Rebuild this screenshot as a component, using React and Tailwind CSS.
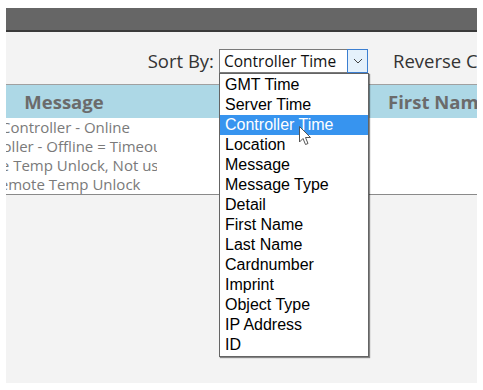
import React from "react";

const segoe = { fontFamily: '"Open Sans", "Noto Sans", sans-serif' };

const items = [
  "GMT Time",
  "Server Time",
  "Controller Time",
  "Location",
  "Message",
  "Message Type",
  "Detail",
  "First Name",
  "Last Name",
  "Cardnumber",
  "Imprint",
  "Object Type",
  "IP Address",
  "ID",
];

const rows = [
  "Controller - Online",
  "Controller - Offline = Timeout",
  "Remote Temp Unlock, Not used",
  "Remote Temp Unlock",
];

export default function App() {
  return (
    <div className="relative w-[483px] h-[390px] bg-white overflow-hidden px-[6px] pt-[8px]">
      <div className="h-[375px] w-[471px] bg-[#f3f3f3] flex flex-col overflow-hidden">
        <div className="h-[22px] bg-[#666666] shrink-0" />
        <div className="h-[2px] bg-[#3a3a3a] shrink-0" />
        <div
          className="h-[53px] shrink-0 flex items-start pt-[17px] text-[#333] whitespace-nowrap border-b border-[#a0a0a0]"
          style={segoe}
        >
          <div className="w-[208px] shrink-0 text-right text-[18.5px] leading-[24px]">Sort By:</div>
          <div className="ml-[5px] w-[149px] h-[24px] shrink-0 bg-white border border-[#7a7a7a] flex items-stretch">
            <div className="flex-1 pl-[4px] text-[15.5px] leading-[22px] text-[#111]">Controller Time</div>
            <div className="w-[21px] -my-px -mr-px border border-[#3c7fd1] bg-[#e5f1fb] flex items-center justify-center">
              <svg width="10" height="6" viewBox="0 0 10 6">
                <path d="M1 1 L5 5 L9 1" fill="none" stroke="#444" strokeWidth="1" />
              </svg>
            </div>
          </div>
          <div className="ml-[25px] text-[18.5px] leading-[24px]">Reverse Chronological</div>
        </div>
        <div className="h-[33px] shrink-0 bg-[#add8e6] flex items-center whitespace-nowrap font-bold text-[#6b6b6b] text-[18.5px]" style={segoe}>
          <div className="w-[186px] ml-[-35px] shrink-0 flex justify-center">Message</div>
          <div className="ml-[231px] shrink-0">First Name</div>
        </div>
        <div className="bg-white shrink-0 border-b border-[#8a8a8a] flex flex-col" style={segoe}>
          {rows.map((r) => (
            <div key={r} className="h-[19px] flex">
              <div className="w-[183px] ml-[-32px] shrink-0 flex justify-center overflow-hidden whitespace-nowrap text-[15px] leading-[19px] text-[#7a7a7a]">
                {r}
              </div>
            </div>
          ))}
        </div>
      </div>

      <div
        className="absolute left-[219px] top-[73px] w-[150px] bg-white border border-[#646464] shadow-[1px_1px_1px_rgba(0,0,0,0.45)] py-px"
        style={{ fontFamily: '"Liberation Sans", Arial, sans-serif' }}
      >
        {items.map((it) => (
          <div
            key={it}
            className={
              it === "Controller Time"
                ? "h-[20px] leading-[20px] pl-[5px] text-[16px] bg-[#3794ef] text-white"
                : "h-[20px] leading-[20px] pl-[5px] text-[16px] text-black"
            }
          >
            {it}
          </div>
        ))}
      </div>

      <svg className="absolute left-[298px] top-[125px]" width="14" height="21" viewBox="0 0 14 21">
        <path
          d="M1.5 1.5 L1.5 17 L5 13.5 L7.5 19.5 L10 18.5 L7.5 12.5 L12.5 12.5 Z"
          fill="white"
          stroke="#555"
          strokeWidth="1"
          strokeLinejoin="round"
        />
      </svg>
    </div>
  );
}
